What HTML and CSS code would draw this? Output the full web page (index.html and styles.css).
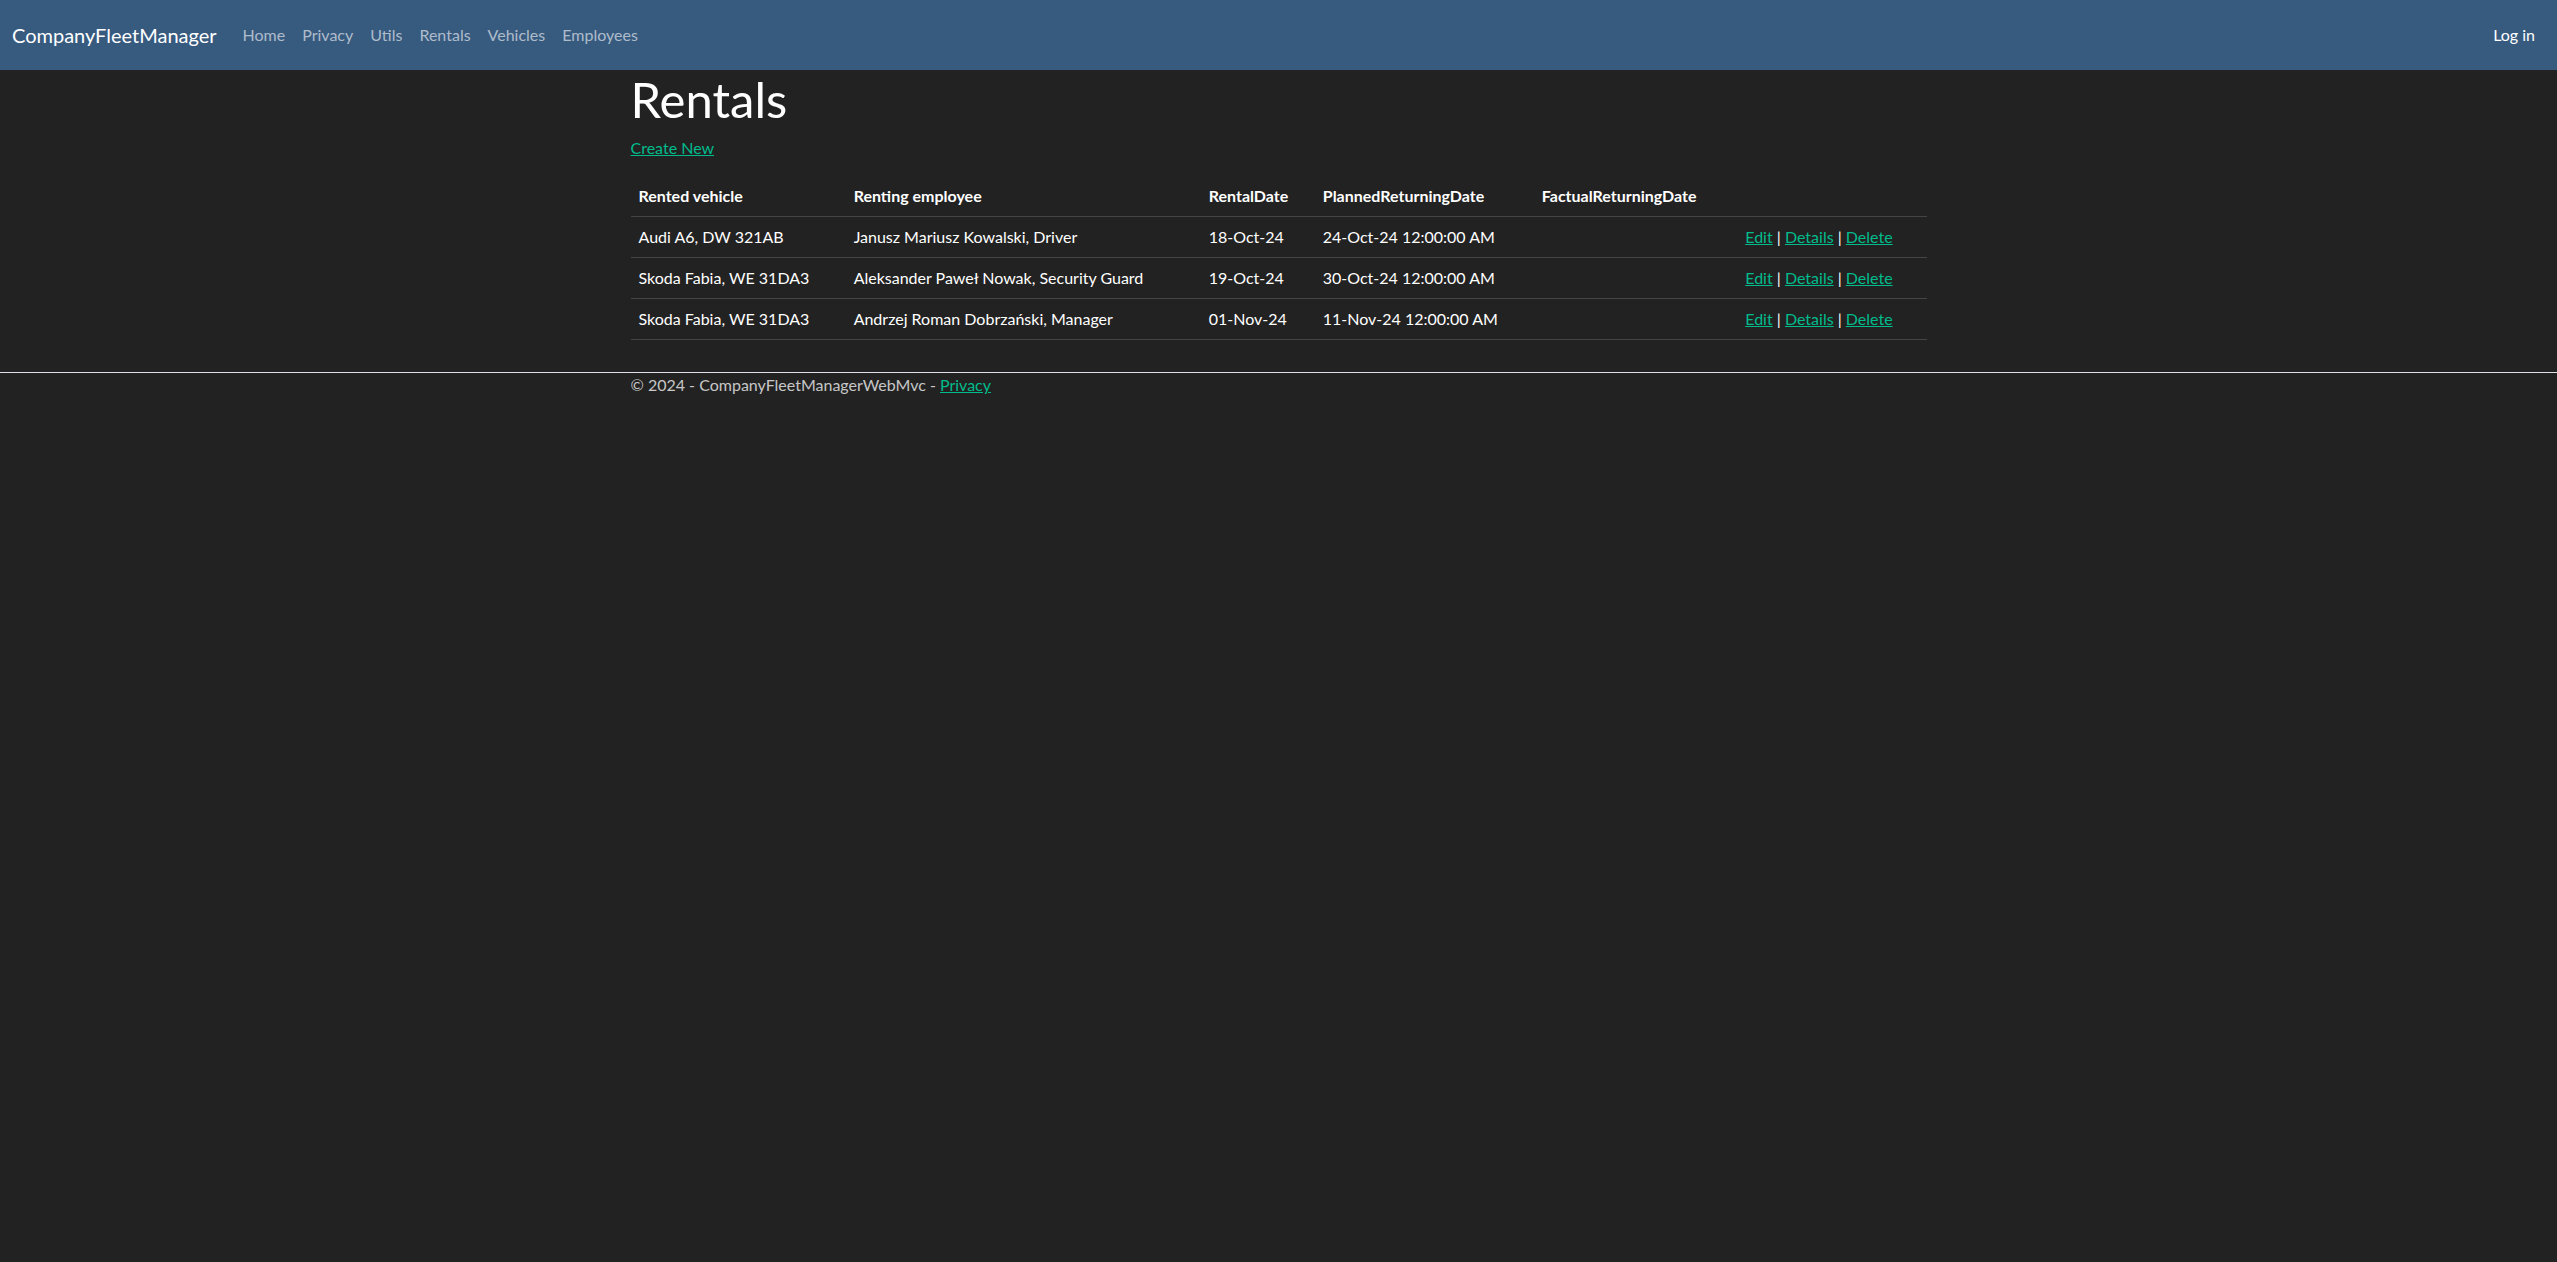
FILE: index.html
```html
<!DOCTYPE html>
<html lang="en">
<head>
<meta charset="utf-8">
<meta name="viewport" content="width=device-width, initial-scale=1">
<title>Rentals - CompanyFleetManager</title>
<link rel="stylesheet" href="styles.css">
</head>
<body>
<header>
<nav class="navbar">
<a class="brand" href="#">CompanyFleetManager</a>
<ul class="nav">
<li><a href="#">Home</a></li>
<li><a href="#">Privacy</a></li>
<li><a href="#">Utils</a></li>
<li><a href="#">Rentals</a></li>
<li><a href="#">Vehicles</a></li>
<li><a href="#">Employees</a></li>
</ul>
<ul class="nav nav-login">
<li><a href="#">Log in</a></li>
</ul>
</nav>
</header>
<main class="container">
<h1>Rentals</h1>
<p><a href="#">Create New</a></p>
<table class="table">
<colgroup>
<col class="col-vehicle">
<col class="col-employee">
<col class="col-rental">
<col class="col-planned">
<col class="col-factual">
<col>
</colgroup>
<thead>
<tr><th>Rented vehicle</th><th>Renting employee</th><th>RentalDate</th><th>PlannedReturningDate</th><th>FactualReturningDate</th><th></th></tr>
</thead>
<tbody>
<tr><td>Audi A6, DW 321AB</td><td>Janusz Mariusz Kowalski, Driver</td><td>18-Oct-24</td><td>24-Oct-24 12:00:00 AM</td><td></td><td><a href="#">Edit</a> | <a href="#">Details</a> | <a href="#">Delete</a></td></tr>
<tr><td>Skoda Fabia, WE 31DA3</td><td>Aleksander Paweł Nowak, Security Guard</td><td>19-Oct-24</td><td>30-Oct-24 12:00:00 AM</td><td></td><td><a href="#">Edit</a> | <a href="#">Details</a> | <a href="#">Delete</a></td></tr>
<tr><td>Skoda Fabia, WE 31DA3</td><td>Andrzej Roman Dobrzański, Manager</td><td>01-Nov-24</td><td>11-Nov-24 12:00:00 AM</td><td></td><td><a href="#">Edit</a> | <a href="#">Details</a> | <a href="#">Delete</a></td></tr>
</tbody>
</table>
</main>
<footer class="footer">
<div class="container">© 2024 - CompanyFleetManagerWebMvc - <a href="#">Privacy</a></div>
</footer>
</body>
</html>
```

FILE: styles.css
```css
*,
*::before,
*::after {
  box-sizing: border-box;
}

body {
  margin: 0;
  background: #222;
  color: #fff;
  font-family: Lato, "Noto Sans", sans-serif;
  font-size: 16px;
  line-height: 24px;
}

a {
  color: #00bc8c;
}

.navbar {
  display: flex;
  align-items: center;
  padding: 16px 14px 16px 12px;
  background: #375a7f;
}

.brand {
  margin-right: 18px;
  padding: 4px 0;
  color: #fff;
  font-size: 20px;
  line-height: 30px;
  text-decoration: none;
}

.nav {
  display: flex;
  gap: 1px;
  margin: 0;
  padding: 0;
  list-style: none;
}

.nav a {
  display: block;
  padding: 7px 8px;
  color: rgba(255, 255, 255, 0.6);
  text-decoration: none;
}

.nav-login {
  margin-left: auto;
}

.nav-login a {
  color: #fff;
}

.container {
  width: 100%;
  max-width: 1320px;
  margin: 0 auto;
  padding: 0 12px;
}

h1 {
  margin: 0 0 8px;
  font-size: 49px;
  font-weight: 400;
  line-height: 58px;
}

p {
  margin: 0 0 16px;
}

.table {
  width: 100%;
  margin-bottom: 32px;
  border-spacing: 0;
  table-layout: fixed;
}

.table th,
.table td {
  padding: 8px;
  border-bottom: 1px solid #444;
  text-align: left;
}

.col-vehicle {
  width: 16.6%;
}

.col-employee {
  width: 27.4%;
}

.col-rental {
  width: 8.8%;
}

.col-planned {
  width: 16.9%;
}

.col-factual {
  width: 15.7%;
}

.footer {
  border-top: 1px solid #dee2e6;
  color: rgba(255, 255, 255, 0.75);
}
```
